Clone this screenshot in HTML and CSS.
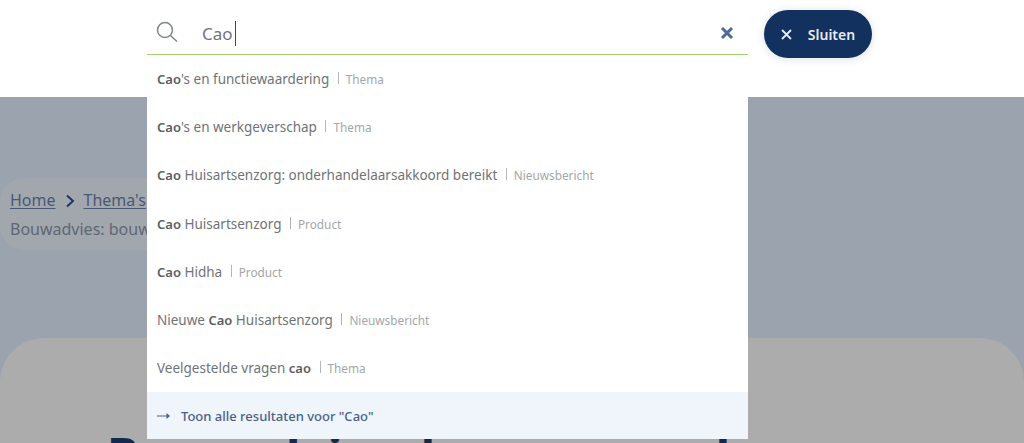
FILE: index.html
```html
<!DOCTYPE html>
<html lang="nl">
    <head>
        <meta charset="UTF-8" />
        <title>Zoeken</title>
        <link rel="stylesheet" href="styles.css">
    </head>
    <body>
        <header class="site-header">
            <div class="search-box">
                <svg class="search-icon" width="24" height="24" viewBox="0 0 24 24" fill="none" stroke="#7f8588" stroke-width="1.5">
                    <circle cx="9" cy="9" r="7.5"/>
                    <path d="M14.5 14.5l6.5 6"/>
                </svg>
                <span class="search-value">Cao</span><span class="caret"></span>
                <svg class="clear-icon" width="14" height="14" viewBox="0 0 14 14" stroke="#4f6a94" stroke-width="3">
                    <path d="M2 2l10 10M12 2L2 12"/>
                </svg>
            </div>
            <button class="close-btn">
                <svg width="11" height="11" viewBox="0 0 11 11" stroke="#e8ebf0" stroke-width="1.8">
                    <path d="M1 1l9 9M10 1l-9 9"/>
                </svg>
                Sluiten
            </button>
        </header>

        <main class="page">
            <nav class="breadcrumb">
                <div class="crumb-line">
                    <a href="#">Home</a>
                    <svg width="10" height="14" viewBox="0 0 10 14" fill="none" stroke="#1c3560" stroke-width="2">
                        <path d="M2 1.5L8 7l-6 5.5"/>
                    </svg>
                    <a href="#">Thema's</a>
                </div>
                <div class="crumb-line">Bouwadvies: bouw</div>
            </nav>
            <section class="card">
                <h1>Bouwadvies: bouw en verbouw</h1>
            </section>
        </main>

        <div class="suggestions">
            <a class="item" href="#"><b>Cao</b>'s en functiewaardering <span class="type">Thema</span></a>
            <a class="item" href="#"><b>Cao</b>'s en werkgeverschap <span class="type">Thema</span></a>
            <a class="item" href="#"><b>Cao</b> Huisartsenzorg: onderhandelaarsakkoord bereikt <span class="type">Nieuwsbericht</span></a>
            <a class="item" href="#"><b>Cao</b> Huisartsenzorg <span class="type">Product</span></a>
            <a class="item" href="#"><b>Cao</b> Hidha <span class="type">Product</span></a>
            <a class="item" href="#">Nieuwe <b>Cao</b> Huisartsenzorg <span class="type">Nieuwsbericht</span></a>
            <a class="item" href="#">Veelgestelde vragen <b>cao</b> <span class="type">Thema</span></a>
            <a class="all-results" href="#">
                <svg width="13" height="8" viewBox="0 0 13 8" fill="#4a6288">
                    <path d="M0 3.4h9.5V1l3.5 3-3.5 3V4.6H0z"/>
                </svg>
                Toon alle resultaten voor "Cao"
            </a>
        </div>
    </body>
</html>
```

FILE: styles.css
```css
html,
body {
    margin: 0;
    height: 443px;
    overflow: hidden;
}

body {
    font-family: "Noto Sans", "Open Sans", sans-serif;
    background-color: #9aa3ae;
    position: relative;
}

.site-header {
    height: 97px;
    background-color: #fff;
    box-sizing: border-box;
    padding: 10px 0 0 147px;
    display: flex;
    align-items: flex-start;
    gap: 16px;
}

.search-box {
    width: 601px;
    height: 45px;
    box-sizing: border-box;
    border-bottom: 1px solid #a5cf6a;
    display: flex;
    align-items: center;
    padding: 2px 14px 0 9px;
    color: #707478;
    font-size: 17px;
}

.search-icon {
    margin-right: 22px;
}

.caret {
    width: 1px;
    height: 25px;
    background-color: #44494f;
    margin-left: 2px;
}

.clear-icon {
    margin-left: auto;
}

.close-btn {
    width: 108px;
    height: 48px;
    border: none;
    border-radius: 24px;
    background-color: #12315f;
    color: #e8ebf0;
    font-family: inherit;
    font-size: 14px;
    font-weight: 600;
    display: flex;
    align-items: center;
    justify-content: center;
    gap: 16px;
    box-shadow: 0 1px 8px rgba(18, 49, 95, 0.15);
}

.page {
    height: 346px;
    overflow: hidden;
    padding-top: 81px;
    box-sizing: border-box;
}

.breadcrumb {
    width: 260px;
    height: 72px;
    box-sizing: border-box;
    padding: 8px 0 0 10px;
    background-color: #a2a7ae;
    border-radius: 24px;
    color: #5f6673;
    font-size: 16px;
    line-height: 29px;
    white-space: nowrap;
}

.crumb-line {
    display: flex;
    align-items: center;
    gap: 9px;
}

.crumb-line a {
    color: #4b5872;
    text-decoration: underline;
    text-underline-offset: 2px;
}

.card {
    margin-top: 88px;
    height: 105px;
    overflow: hidden;
    padding-left: 107px;
    background-color: #acacac;
    border-radius: 44px 44px 0 0;
}

h1 {
    margin: 0;
    padding-top: 89px;
    color: #12284d;
    font-size: 48px;
    line-height: 56px;
    font-weight: 700;
    white-space: nowrap;
}

.suggestions {
    position: absolute;
    left: 147px;
    top: 55px;
    width: 601px;
    background-color: #fff;
}

.item {
    display: block;
    height: 48.2px;
    box-sizing: border-box;
    padding-left: 10px;
    color: #6f7377;
    font-size: 13.5px;
    line-height: 48px;
    text-decoration: none;
    white-space: nowrap;
}

.item b {
    font-weight: 600;
    font-size: 13px;
    color: #5a5e62;
}

.type {
    margin-left: 5px;
    padding-left: 8px;
    font-size: 11.8px;
    color: #a3a6a9;
    position: relative;
}

.type::before {
    content: "";
    position: absolute;
    left: 0;
    top: 1px;
    width: 1px;
    height: 12px;
    background-color: #b4b7ba;
}

.all-results {
    display: flex;
    align-items: center;
    gap: 11px;
    height: 46.6px;
    padding-left: 10px;
    background-color: #eff5fa;
    color: #4a6288;
    font-size: 13px;
    font-weight: 500;
    text-decoration: none;
}
```
